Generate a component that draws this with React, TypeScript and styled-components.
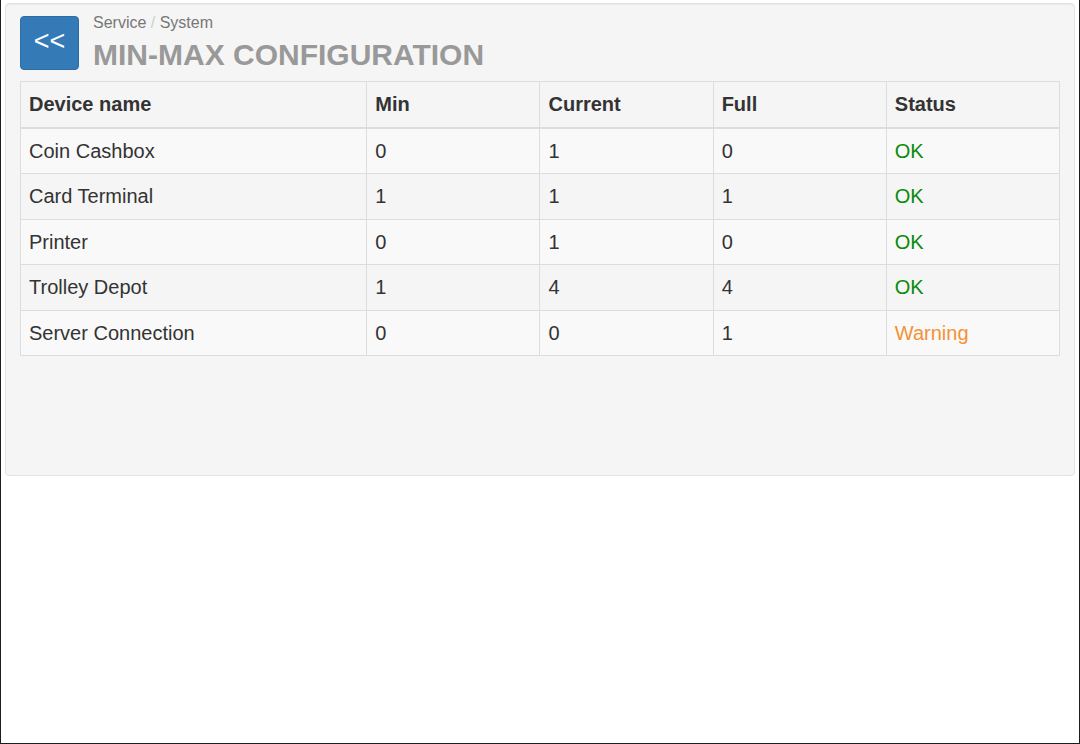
import React from "react";
import styled, { createGlobalStyle } from "styled-components";

const GlobalStyle = createGlobalStyle`
  html, body {
    margin: 0;
    padding: 0;
    background: #fff;
  }
  body {
    font-family: "Liberation Sans", Arial, sans-serif;
    color: #333;
  }
  * {
    box-sizing: border-box;
  }
`;

type Status = "OK" | "Warning";

interface Device {
  name: string;
  min: number;
  current: number;
  full: number;
  status: Status;
}

const devices: Device[] = [
  { name: "Coin Cashbox", min: 0, current: 1, full: 0, status: "OK" },
  { name: "Card Terminal", min: 1, current: 1, full: 1, status: "OK" },
  { name: "Printer", min: 0, current: 1, full: 0, status: "OK" },
  { name: "Trolley Depot", min: 1, current: 4, full: 4, status: "OK" },
  { name: "Server Connection", min: 0, current: 0, full: 1, status: "Warning" },
];

function App() {
  return (
    <>
      <GlobalStyle />
      <Frame>
        <Well>
          <Header>
            <BackButton type="button">&lt;&lt;</BackButton>
            <Heading>
              <Breadcrumb>
                Service <Separator>/</Separator> System
              </Breadcrumb>
              <Title>MIN-MAX CONFIGURATION</Title>
            </Heading>
          </Header>

          <Table>
            <colgroup>
              <col style={{ width: "33.333%" }} />
              <col style={{ width: "16.667%" }} />
              <col style={{ width: "16.667%" }} />
              <col style={{ width: "16.667%" }} />
              <col style={{ width: "16.667%" }} />
            </colgroup>
            <thead>
              <tr>
                <Th>Device name</Th>
                <Th>Min</Th>
                <Th>Current</Th>
                <Th>Full</Th>
                <Th>Status</Th>
              </tr>
            </thead>
            <tbody>
              {devices.map((d, i) => (
                <Row key={d.name} $striped={i % 2 === 0}>
                  <Td>{d.name}</Td>
                  <Td>{d.min}</Td>
                  <Td>{d.current}</Td>
                  <Td>{d.full}</Td>
                  <StatusCell $status={d.status}>{d.status}</StatusCell>
                </Row>
              ))}
            </tbody>
          </Table>
        </Well>
      </Frame>
    </>
  );
}

export default App;

const Frame = styled.div`
  height: 744px;
  border-left: 1px solid #1e1e1e;
  border-right: 1px solid #1e1e1e;
  border-bottom: 1px solid #1e1e1e;
  padding: 3px 4px 0 4px;
`;

const Well = styled.div`
  height: 473px;
  background-color: #f5f5f5;
  border: 1px solid #e3e3e3;
  border-radius: 4px;
  box-shadow: inset 0 1px 1px rgba(0, 0, 0, 0.05);
  padding: 12px 14px;
`;

const Header = styled.div`
  display: flex;
  align-items: flex-start;
  gap: 14px;
  height: 54px;
  margin-bottom: 11px;
`;

const BackButton = styled.button`
  width: 59px;
  height: 54px;
  border: 1px solid #2e6da4;
  border-radius: 4px;
  background-color: #337ab7;
  color: #fff;
  font-family: "Liberation Sans", Arial, sans-serif;
  font-size: 27px;
  line-height: 1;
  padding: 0 0 4px 0;
  cursor: pointer;
`;

const Heading = styled.div`
  display: flex;
  flex-direction: column;
`;

const Breadcrumb = styled.div`
  font-size: 16px;
  line-height: 20px;
  color: #777;
  margin-top: -3px;
`;

const Separator = styled.span`
  color: #ccc;
`;

const Title = styled.h1`
  margin: 5px 0 0 0;
  font-size: 30px;
  line-height: 34px;
  font-weight: 700;
  color: #999;
`;

const Table = styled.table`
  width: 100%;
  border-collapse: collapse;
  border-spacing: 0;
  table-layout: fixed;
  border: 1px solid #ddd;
  font-size: 20px;
  line-height: 1.42857;
`;

const Th = styled.th`
  text-align: left;
  font-weight: 700;
  padding: 8px;
  border: 1px solid #ddd;
  border-bottom: 2px solid #ddd;
  vertical-align: bottom;
`;

const Row = styled.tr<{ $striped: boolean }>`
  background-color: ${(p) => (p.$striped ? "#f9f9f9" : "transparent")};
`;

const Td = styled.td`
  padding: 8px;
  border: 1px solid #ddd;
  vertical-align: top;
`;

const StatusCell = styled(Td)<{ $status: Status }>`
  color: ${(p) => (p.$status === "OK" ? "#0a8a0a" : "#f39237")};
`;
